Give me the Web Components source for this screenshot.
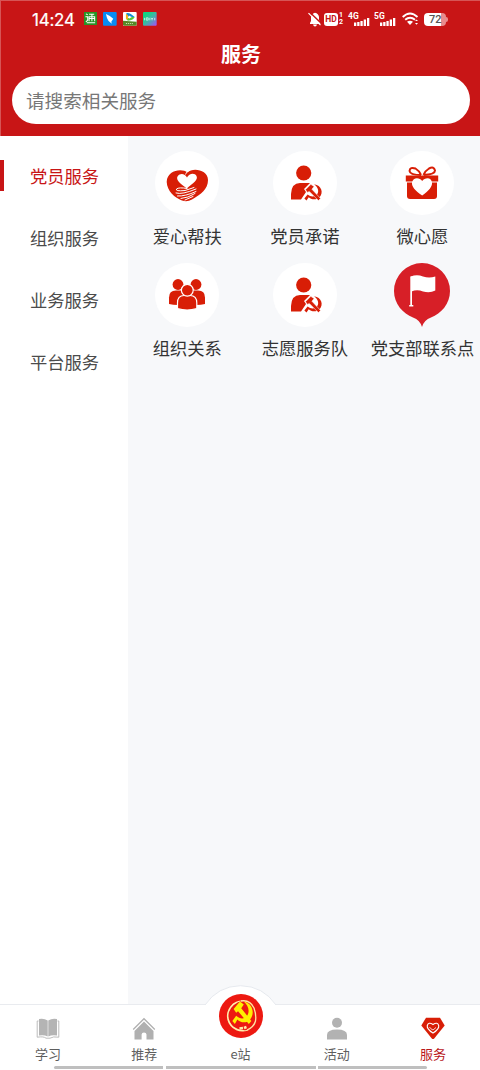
<!DOCTYPE html>
<html lang="zh-CN">
<head>
<meta charset="utf-8">
<title>服务</title>
<style>
html,body{margin:0;height:100%}
body{font-family:"Noto Sans CJK SC","Noto Sans",sans-serif;background:#fff;overflow:hidden}
</style>
</head>
<body>
<service-app></service-app>
<script>
const define = (name, html) => {
  const t = document.createElement('template');
  t.innerHTML = html;
  customElements.define(name, class extends HTMLElement {
    constructor() {
      super();
      this.attachShadow({mode: 'open'}).appendChild(t.content.cloneNode(true));
    }
  });
};

const emblem = 'M-7 -3L-2 -8L1 -6L-1 -3.5L7 5L5 7L-3.5 -1.500L-5 -.5Z';
const sickle = 'M1 -8C8 -7 10 0 6 4C3 7 -2 6 -4 4L-6 7L-8 5L-5 1.500C-2 4 2 4 4 1C6 -2 4 -6 1 -8Z';

/* Each icon: [viewBox, body] */
const member = `<circle cx="30.700" cy="22" r="7.600"/><path d="M18 48.500V43Q18.500 32 27 32H37L31 38L33 41L28 48.500Z"/><g transform="translate(40 42) scale(1.080)"><path d="${sickle}"/><path d="${emblem}" stroke="#fff" stroke-width=".5"/></g>`;
const ICONS = {
  care: ['0 0 64 64', `<path d="M32.500 21.500C27 17 12 19 11.700 31C12 40 20 47 27 49.500Q32 51.500 37 48.500C46 43.500 53 38 53 29C53 19 38 16 32.500 21.500Z"/><path fill="none" stroke="#fff" stroke-width=".9" d="M34 19.500Q31 21 30.500 23.500"/><path fill="#fff" d="M31.800 37.500C26 33 20.500 29 22.500 25.500C25.500 21.500 30 23 32 26.500C34 22 40 21.500 41.500 25C43.500 29 38 32 31.800 37.500Z"/><g fill="none" stroke="#fff" stroke-width="1" stroke-linecap="round"><path d="M32 37.500Q24 36 21.500 38Q20 40.500 30 39.500L39 36.500"/><path d="M21 42Q27 44 41 38M22.500 45Q30 45.500 41 40.500M26 47.500Q33 47 40 42.500M30 49L38 45.500"/></g>`],
  member: ['0 0 64 64', member],
  gift: ['0 0 64 64', `<path d="M15.800 24.500H48.200V30.500H15.800Z"/><path d="M17 31.500H47V45Q47 48 44 48H20Q17 48 17 45Z"/><path fill="#fff" d="M32.200 44.500C25 39.500 21.500 35.500 22 31.500C23 26 29.500 26 32.200 30C35 26 41.500 26 42 31.500C42.500 35.500 39 39.500 32.200 44.500Z"/><g fill="none" stroke="#d81e06" stroke-width="2"><path d="M31 24Q20 24 19.500 20Q20 15.500 25.500 17.500Q29 19.500 31 24M33.500 24Q45 23.500 45 19.500Q44 15 39 17.500Q35.500 19.500 33.500 24"/></g>`],
  group: ['0 0 64 64', `<circle cx="23" cy="21.500" r="5.400"/><circle cx="41" cy="21.500" r="5.400"/><path d="M14 41V34.500Q14 27.500 21 27.500H43Q50 27.500 50 34.500V41Q46 42 41 42H23Q18 42 14 41Z"/><g stroke="#fff" stroke-width="1.200"><path d="M22.500 45.500V40Q22.500 32.500 29 32.500H35Q41.800 32.500 41.800 40V45.500Q32 48.500 22.500 45.500Z"/><circle cx="32.300" cy="27.200" r="5.900"/></g>`],
  pin: ['0 0 64 64', `<path fill="#d71f27" d="M32 0A28 28 0 0 1 60 28C60 41 51 50.500 41 54.500Q34 57 32 64Q30 57 23 54.500C13 50.500 4 41 4 28A28 28 0 0 1 32 0Z"/><path fill="#fff" d="M20.300 13.500H22V42H23.300V43.500H19.200V42H20.300Z"/><path fill="#fff" d="M20.800 13.500Q27 11 33 13.500Q39 15.500 45.300 13.500V27.500Q40 30.500 33 28.500Q27 26 21.500 28.500Z"/>`],
  book: ['0 0 24 24', `<g fill="#b4b4b4"><path d="M3 2Q8 1 11.700 3.500V19.500Q8 17.500 3 18.500ZM21 2Q16 1 12.300 3.500V19.500Q16 17.500 21 18.500Z"/></g><path fill="none" stroke="#b4b4b4" stroke-width=".9" d="M2.500 4H1.200V20.200Q8 19.200 10 21.200H14Q17 19.200 22.800 20.200V4H21.500"/>`],
  home: ['0 0 24 24', `<path fill="none" stroke="#b0b0b0" stroke-width="1.300" d="M1.200 12.500L12 1.700L22.800 12.500"/><path fill="#b0b0b0" d="M12 4.500L21.500 14V22.500H14.500V17.500Q14.300 15.500 12 15.500Q9.800 15.500 9.600 17.500V22.500H2.500V14Z"/>`],
  person: ['0 0 24 24', `<g fill="#b2b2b2"><circle cx="12" cy="5.800" r="5"/><path d="M2 22.500V18Q2 12.500 12 12.500Q22 12.500 22 18V22.500Z"/></g>`],
  gem: ['0 0 24 24', `<path d="M5 .8H19L23.700 8.500L13 21.700Q12 22.500 11 21.700L.300 8.500Z"/><path fill="none" stroke="#fff" stroke-width="1.100" d="M12 16Q5.500 12 6.300 8.500Q7.500 4.500 12 7.500Q16.500 4.500 17.700 8.500Q18.500 12 12 16Z"/><path fill="none" stroke="#fff" stroke-width=".8" d="M8.500 10Q9.500 12 12 13L15 10.500"/>`],
  station: ['0 0 44 44', `<circle cx="22" cy="22" r="22" fill="#ed1911"/><path fill="#fff0ae" d="M24 6.500A15.500 15.500 0 1 0 31 35.500Q25 37 19 35A14 14 0 0 1 10 18Q13 9.500 24 6.500Z"/><path fill="none" stroke="#ffe5a0" stroke-width="1.300" d="M22 7Q31 5.500 35 14Q37.500 21 36.500 27Q35 33 28 36"/><g fill="#ffef00" transform="translate(23.500 19.500) scale(1.270 1.500)"><path d="${sickle}"/><path d="${emblem}"/></g><path stroke="#ffe9a8" stroke-width="2.600" d="M20.500 34.500L24 34M25 34L27.500 33"/>`],
  mail: ['0 0 14 14', `<rect width="14" height="14" fill="#289326"/><path fill="none" stroke="#fff" stroke-width="1.100" d="M2 2L4 3M1.500 5H4V9L2 10.500M5.500 2.500H11M5.500 10V5H11.500V10M5.500 7H11.500M8.500 2V10M3 11.500H12"/>`],
  bird: ['0 0 14 14', `<rect width="14" height="14" rx="1" fill="#078cf4"/><path fill="#fff" d="M3 2Q8 4 10.500 7L8.500 10L9 12L6 9.500L5.500 9Q4 7 3 2Z"/>`],
  play: ['0 0 14 14', `<rect width="14" height="14" rx="1" fill="#fff"/><path fill="#128bd3" d="M3 2Q4 0 8 2L12 5L7 6Z"/><path fill="#5bc83a" d="M12 5Q11 8 5 9L3 7L9 5Z"/><path fill="#f4ae15" d="M3 2L5 3V8L3 7Z"/><path fill="#fff" d="M6 3.500L9 5L6 7Z"/><path fill="#568725" d="M0 9L14 10V13L13 14H1L0 13Z"/><path stroke="#e3edcf" d="M3 11.800H11" stroke-dasharray="1 1"/>`],
  iqiyi: ['0 0 14 14', `<defs><linearGradient id="g" x1="0" y1="0" x2="1" y2="1"><stop offset=".2" stop-color="#12d481"/><stop offset=".5" stop-color="#3bb9a4"/><stop offset="1" stop-color="#a84df5"/></linearGradient></defs><rect width="14" height="14" rx="1" fill="url(#g)"/><path fill="none" stroke="#d9fff0" stroke-width=".8" d="M1.500 6V8.500M3.300 6H5.300V8.300H3.300ZM7 6V8.500M8.300 6L9.300 7.200L10.300 6M9.300 7V8.500M12 6V8.500"/>`],
  bell: ['0 0 14 15', `<g fill="#fff"><path d="M2 11L3 9V5Q4 1.500 7 .8Q10.500 1.500 11 5V8L12.500 11V12H2Z"/><path d="M5 12.500H9Q8.500 14.500 7 14.500T5 12.500Z"/></g><path stroke="#c81516" stroke-width="1.500" d="M1.500 0L14 12"/><path stroke="#fff" stroke-width="1.200" d="M.500 1.200L12.500 13.200"/>`],
  wifi: ['0 0 17 14', `<g fill="none" stroke="#fff" stroke-width="1.900"><path d="M.700 5Q8 -2 15.500 5M3.200 7.800Q8 3.600 13 7.800"/></g><path fill="#fff" d="M5 9.800Q8 7.500 11 9.800L8 13ZM13 9L14.500 7.500L16 9ZM13 11H16L14.500 12.800Z"/>`],
  bars: ['0 0 16 8', `<path fill="#fff" d="M0 4.500H2.300V8H0ZM3.200 4H5.500V8H3.200ZM6.400 3H8.700V8H6.400ZM9.700 1.500H12V8H9.700ZM13 0H15.300V8H13Z"/>`]
};
customElements.define('app-icon', class extends HTMLElement {
  constructor() {
    super();
    const [box, body] = ICONS[this.getAttribute('name')];
    this.attachShadow({mode: 'open'}).innerHTML =
      `<style>:host{display:block;flex:none}svg{display:block;width:100%;height:100%;fill:#d81e06;overflow:visible}</style><svg viewBox="${box}" aria-hidden="true">${body}</svg>`;
  }
});

define('cell-signal', `<style>:host{display:block;position:relative;width:21px;height:15px;flex:none}
  .t{display:block;font:700 8.500px/8px Roboto,sans-serif;color:#fff}app-icon{position:absolute;left:6px;top:6px;width:16px;height:8px}</style>
  <span class="t"><slot></slot></span><app-icon name="bars"></app-icon>`);

define('phone-status', `<style>
  :host{display:flex;box-sizing:border-box;height:38px;padding:0 32px;align-items:center;color:#fff}
  time{font:400 17px/38px Inter,sans-serif;width:52px;letter-spacing:-.25px;position:relative;top:1px;-webkit-text-stroke:.2px #fff}
  .apps{display:flex;gap:6.300px}.apps app-icon{width:13.700px;height:13.700px}.apps app-icon:first-child{width:13px;height:13px}
  .right{display:flex;margin-left:auto;align-items:center}
  .bell{width:14px;height:15px}
  .hd{margin-left:2px;width:14px;height:13px;border-radius:3px;background:#fff;color:#c81516;font:700 8.500px/13px Roboto,sans-serif;text-align:center}
  .sim{font:700 7px/7px Roboto,sans-serif;width:5px;margin-left:1px;display:grid}
  .first{margin-left:4px}.second{margin-left:5px}
  .wifi{width:17px;height:14px;margin-left:7px}
  .bat{display:flex;margin-left:5px;align-items:center}
  .cell{box-sizing:border-box;width:22px;height:13px;border-radius:4px;background:linear-gradient(90deg,#fff 77%,#e88b8d 77%);color:#555;font:500 11px/13.500px Roboto,sans-serif;padding-left:5px}
  .cap{width:2px;height:5px;background:#e88b8d;border-radius:0 2px 2px 0}
</style>
<time>14:24</time><div class="apps"><app-icon name="mail"></app-icon><app-icon name="bird"></app-icon><app-icon name="play"></app-icon><app-icon name="iqiyi"></app-icon></div>
<div class="right"><app-icon class="bell" name="bell"></app-icon><span class="hd">HD</span><span class="sim"><span>1</span><span>2</span></span><cell-signal class="first">4G</cell-signal><cell-signal class="second">5G</cell-signal><app-icon class="wifi" name="wifi"></app-icon><span class="bat"><span class="cell">72</span><span class="cap"></span></span></div>`);

define('search-box', `<style>:host{display:block;box-sizing:border-box;height:48px;margin:0 10px 0 12px;padding-left:14px;border-radius:24px;background:#fff;color:#777;font-size:18.600px;line-height:47px}</style><slot></slot>`);

define('page-header', `<style>:host{display:flex;flex-direction:column;height:136px;background:#c81516;box-sizing:border-box;box-shadow:inset 1px 1px #d65556}
  h1{margin:0;height:38px;font-size:20px;line-height:32px;text-align:center;color:#fff;font-weight:700;padding-left:2px}</style>
  <phone-status></phone-status><h1><slot></slot></h1><search-box>请搜索相关服务</search-box>`);

define('side-item', `<style>:host{display:flex;box-sizing:border-box;height:62.200px;align-items:center;color:#4b4b4b;font-size:17.300px;line-height:26px}
  i{width:4px;height:31px;margin-right:26px}:host([active]){color:#c81516}:host([active]) i{background:#c81516}</style><i></i><slot></slot>`);

define('service-tile', `<style>:host{display:flex;flex-direction:column;align-items:center;height:112px;min-width:0;color:#333;font-size:17.300px;line-height:26px;white-space:nowrap}
  .disc{width:64px;height:64px;border-radius:50%;background:#fff;margin-bottom:8px}:host([plain]) .disc{background:none}</style>
  <div class="disc"><slot name="icon"></slot></div><slot></slot>`);

define('tab-item', `<style>:host{display:flex;flex:1;flex-direction:column;align-items:center;color:#5e5e5e;font-size:13px;line-height:20px;padding-top:12px}
  ::slotted(app-icon){width:24px;height:24px;margin-bottom:3px}:host([active]){color:#b9171a}
  :host([center]){padding-top:0;margin-top:-11px}:host([center]) ::slotted(app-icon){width:44px;height:44px;margin-bottom:6px}</style>
  <slot name="icon"></slot><slot></slot>`);

define('tab-bar', `<style>:host{display:block;position:relative;height:66px;box-sizing:border-box;background:#fff;border-top:1px solid #e9ebef}
  .hump{position:absolute;left:201px;top:-20px;width:80px;height:20px;overflow:hidden}
  .hump svg{display:block}
  nav{display:flex;margin-right:-1px;position:relative}
  .home{display:grid;grid-template-columns:109px 150px 109px;gap:2.500px;position:absolute;left:54px;bottom:1px}
  .home i{height:3px;background:#bfbfbf}.home i:first-child{border-radius:2px 0 0 2px}.home i:last-child{border-radius:0 2px 2px 0}
</style><div class="hump"><svg width="80" height="21" viewBox="0 0 80 21"><path d="M4 20Q17 1 39.500 .7Q62 1 75 20" fill="#fff" stroke="#e6e9ee"/></svg></div>
<nav><slot></slot></nav><div class="home"><i></i><i></i><i></i></div>`);

define('service-app', `<style>
  :host{display:flex;flex-direction:column;width:480px;height:1070px;overflow:hidden}
  main{flex:1;display:grid;grid-template-columns:128px 1fr;min-height:0}
  aside{background:#fff;padding-top:8.500px}
  .grid{background:#f7f8fa;display:grid;grid-template-columns:repeat(3,117.600px);align-content:start;padding:15px 0 0 .5px}
  .grid app-icon{width:64px;height:64px}
</style>
<page-header>服务</page-header>
<main><aside><side-item active>党员服务</side-item><side-item>组织服务</side-item><side-item>业务服务</side-item><side-item>平台服务</side-item></aside>
<section class="grid">
<service-tile><app-icon slot="icon" name="care"></app-icon>爱心帮扶</service-tile>
<service-tile><app-icon slot="icon" name="member"></app-icon>党员承诺</service-tile>
<service-tile><app-icon slot="icon" name="gift"></app-icon>微心愿</service-tile>
<service-tile><app-icon slot="icon" name="group"></app-icon>组织关系</service-tile>
<service-tile><app-icon slot="icon" name="member"></app-icon>志愿服务队</service-tile>
<service-tile plain><app-icon slot="icon" name="pin"></app-icon>党支部联系点</service-tile>
</section></main>
<tab-bar>
<tab-item><app-icon slot="icon" name="book"></app-icon>学习</tab-item>
<tab-item><app-icon slot="icon" name="home"></app-icon>推荐</tab-item>
<tab-item center><app-icon slot="icon" name="station"></app-icon>e站</tab-item>
<tab-item><app-icon slot="icon" name="person"></app-icon>活动</tab-item>
<tab-item active><app-icon slot="icon" name="gem"></app-icon>服务</tab-item>
</tab-bar>`);
</script>
</body>
</html>
